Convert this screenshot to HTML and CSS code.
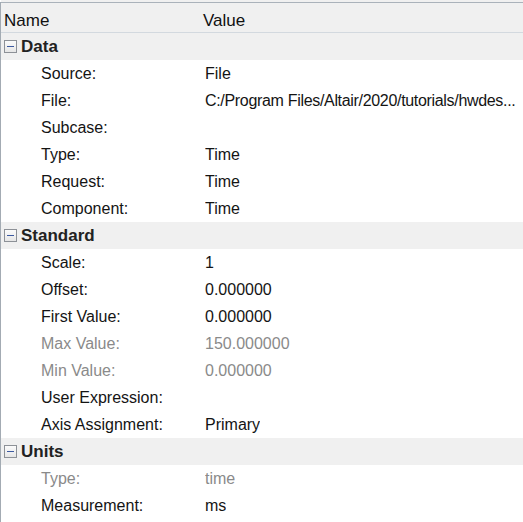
FILE: index.html
```html
<!DOCTYPE html>
<html>
<head>
<meta charset="utf-8">
<link rel="stylesheet" href="styles.css">
</head>
<body>
<div class="panel">
  <div class="colhead">
    <div class="hname">Name</div>
    <div class="hvalue">Value</div>
  </div>
  <div class="group">
    <div class="ghead"><span class="tog"></span><span class="gtitle">Data</span></div>
    <div class="row"><div class="lab">Source:</div><div class="val">File</div></div>
    <div class="row"><div class="lab">File:</div><div class="val path">C:/Program Files/Altair/2020/tutorials/hwdes...</div></div>
    <div class="row"><div class="lab">Subcase:</div><div class="val"></div></div>
    <div class="row"><div class="lab">Type:</div><div class="val">Time</div></div>
    <div class="row"><div class="lab">Request:</div><div class="val">Time</div></div>
    <div class="row"><div class="lab">Component:</div><div class="val">Time</div></div>
  </div>
  <div class="group">
    <div class="ghead"><span class="tog"></span><span class="gtitle">Standard</span></div>
    <div class="row"><div class="lab">Scale:</div><div class="val">1</div></div>
    <div class="row"><div class="lab">Offset:</div><div class="val">0.000000</div></div>
    <div class="row"><div class="lab">First Value:</div><div class="val">0.000000</div></div>
    <div class="row dis"><div class="lab">Max Value:</div><div class="val">150.000000</div></div>
    <div class="row dis"><div class="lab">Min Value:</div><div class="val">0.000000</div></div>
    <div class="row"><div class="lab">User Expression:</div><div class="val"></div></div>
    <div class="row"><div class="lab">Axis Assignment:</div><div class="val">Primary</div></div>
  </div>
  <div class="group">
    <div class="ghead"><span class="tog"></span><span class="gtitle">Units</span></div>
    <div class="row dis"><div class="lab">Type:</div><div class="val">time</div></div>
    <div class="row"><div class="lab">Measurement:</div><div class="val">ms</div></div>
  </div>
</div>
</body>
</html>
```
FILE: styles.css
```css
html, body {
  margin: 0;
  padding: 0;
  background: #ffffff;
}
body {
  font-family: "Liberation Sans", Arial, sans-serif;
  color: #141414;
  width: 523px;
  height: 522px;
  overflow: hidden;
}
.panel {
  border-left: 1px solid #a3abb3;
  height: 522px;
  box-sizing: border-box;
  background: #ffffff;
}
.colhead {
  display: flex;
  align-items: center;
  height: 29px;
  background: #f0f0f0;
  border-top: 1px solid #aab2ba;
  border-bottom: 1px solid #d3d9df;
  margin-top: 2px;
  box-shadow: 0 -2px 0 #f0f0f0;
  font-size: 17px;
  color: #111;
}
.hname {
  width: 199px;
  padding-left: 3px;
  padding-top: 7px;
}
.hvalue {
  padding-top: 7px;
}
.ghead {
  display: flex;
  align-items: center;
  height: 27px;
  background: #f0f0f0;
}
.tog {
  width: 11px;
  height: 11px;
  margin-left: 3px;
  margin-right: 4px;
  border: 1px solid #8d9197;
  background: linear-gradient(#fbfbfb, #e6e6e6);
  position: relative;
  box-sizing: content-box;
}
.tog::after {
  content: "";
  position: absolute;
  left: 2px;
  right: 2px;
  top: 5px;
  height: 1px;
  background: #3d5aa0;
}
.gtitle {
  font-weight: bold;
  font-size: 17px;
  color: #222;
}
.row {
  display: flex;
  align-items: center;
  height: 27px;
  font-size: 16px;
}
.lab {
  width: 164px;
  padding-left: 40px;
  flex: none;
}
.val {
  white-space: nowrap;
  overflow: hidden;
}
.path {
  letter-spacing: -0.32px;
}
.dis {
  color: #8a8a8a;
}
.dis .lab, .dis .val {
  color: #8a8a8a;
}
```
